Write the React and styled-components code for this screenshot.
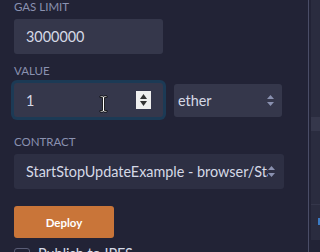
import React from "react";
import styled, { createGlobalStyle } from "styled-components";

const Global = createGlobalStyle`
  html, body { margin: 0; padding: 0; background: #222336; overflow: hidden; }
  body { font-family: "Lato", "Open Sans", sans-serif; }
  * { box-sizing: border-box; }
`;

const Page = styled.div`
  display: flex;
  width: 320px;
  height: 252px;
  background: #222336;
  overflow: hidden;
`;

const Main = styled.div`
  position: relative;
  width: 308px;
  padding-left: 14px;
  display: flex;
  flex-direction: column;
  & > * { flex-shrink: 0; }
`;

const Divider = styled.div`
  width: 1px;
  background: #4a4d67;
`;

const Side = styled.div`
  flex: 1;
  height: 240px;
  margin-left: 2px;
  background: #2a2c3f;
  display: flex;
  flex-direction: column;
  padding-top: 117px;
`;

const Grip = styled.div`
  height: 14px;
  background: #35374b;
`;

const SideLine = styled.div`
  margin-top: 73px;
  height: 1px;
  background: #34364a;
`;

const SideMark = styled.div`
  margin-top: 13px;
  margin-left: auto;
  width: 2px;
  height: 7px;
  background: #3b7bc4;
`;

const Label = styled.div`
  font-size: 11.5px;
  line-height: 14px;
  color: #8a91b0;
  text-transform: uppercase;
  margin-top: ${(p) => p.$top || 0}px;
  margin-bottom: 5px;
`;

const Field = styled.div`
  position: relative;
  display: flex;
  align-items: center;
  width: ${(p) => p.$w}px;
  height: ${(p) => p.$h || 35}px;
  padding: 0 ${(p) => p.$padR ?? p.$pad ?? 12}px 0 ${(p) => p.$pad ?? 12}px;
  background: ${(p) => p.$bg || "#35374b"};
  border-radius: 3px;
  color: #d5d9e6;
  font-size: 14.4px;
  white-space: nowrap;
  overflow: hidden;
  box-shadow: ${(p) => (p.$focus ? "0 0 0 3px #1c3a55" : "none")};
`;

const FieldText = styled.span`
  flex: 1;
  min-width: 0;
  overflow: hidden;
  text-overflow: clip;
`;

const Row = styled.div`
  display: flex;
  gap: 11px;
  align-items: center;
`;

const Spinner = styled.div`
  width: 15px;
  height: 18px;
  background: #efefef;
  display: flex;
  flex-direction: column;
  align-items: center;
  justify-content: center;
  gap: 2px;
`;

const Arrows = styled.svg`
  flex: none;
  width: 7px;
  height: 11px;
  margin-left: ${(p) => p.$gap ?? 2}px;
`;

const DeployButton = styled.button`
  margin-top: 17px;
  width: 100px;
  height: 32px;
  border: none;
  border-radius: 3px;
  background: #c97539;
  color: #ffffff;
  font-family: "Lato", sans-serif;
  font-size: 11.5px;
  font-weight: 700;
  padding: 0;
`;

const CheckRow = styled.div`
  margin-top: 10px;
  display: flex;
  align-items: flex-start;
  gap: 8px;
`;

const Box = styled.div`
  width: 16px;
  height: 16px;
  border: 1px solid #5a5d76;
  border-radius: 3px;
`;

const CheckText = styled.span`
  font-size: 14.4px;
  line-height: 16px;
  color: #d5d9e6;
  margin-top: -2px;
`;

const Cursor = styled.svg`
  position: absolute;
  left: 99px;
  top: 95px;
  width: 9px;
  height: 18px;
`;

function SelectArrows({ color = "#8a91b0", gap }) {
  return (
    <Arrows viewBox="0 0 7 11" $gap={gap}>
      <path d="M3.5 0 L7 4 L0 4 Z" fill={color} />
      <path d="M0 7 L7 7 L3.5 11 Z" fill={color} />
    </Arrows>
  );
}

export default function App() {
  return (
    <Page>
      <Global />
      <Main>
        <Label>Gas limit</Label>
        <Field $w={149}>3000000</Field>
        <Label $top={10}>Value</Label>
        <Row>
          <Field $w={149} $h={34} $focus>
            <FieldText>1</FieldText>
            <Spinner>
              <svg width="7" height="5" viewBox="0 0 7 5">
                <path d="M3.5 0 L7 5 L0 5 Z" fill="#333" />
              </svg>
              <svg width="7" height="5" viewBox="0 0 7 5">
                <path d="M0 0 L7 0 L3.5 5 Z" fill="#333" />
              </svg>
            </Spinner>
          </Field>
          <Field $w={108} $h={33} $pad={4} $padR={8} $bg="#35374b">
            <FieldText>ether</FieldText>
            <SelectArrows />
          </Field>
        </Row>
        <Label $top={18}>Contract</Label>
        <Field $w={270} $padR={9} $bg="#2d2f43">
          <FieldText>StartStopUpdateExample - browser/StartStopUpdateExample.sol</FieldText>
          <SelectArrows gap={0} />
        </Field>
        <DeployButton>Deploy</DeployButton>
        <CheckRow>
          <Box />
          <CheckText>Publish to IPFS</CheckText>
        </CheckRow>
        <Cursor viewBox="0 0 9 18">
          <path
            d="M1 1 H4 L4.5 1.5 L5 1 H8 V2.5 H5.5 V15.5 H8 V17 H5 L4.5 16.5 L4 17 H1 V15.5 H3.5 V2.5 H1 Z"
            fill="#ffffff"
            stroke="#000000"
            strokeWidth="0.8"
          />
        </Cursor>
      </Main>
      <Divider />
      <Side>
        <Grip />
        <SideLine />
        <SideMark />
      </Side>
    </Page>
  );
}
